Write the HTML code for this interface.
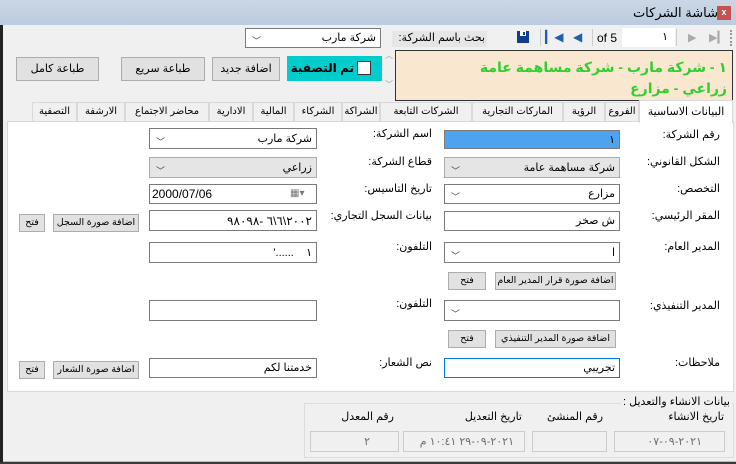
<!DOCTYPE html>
<html><head><meta charset="utf-8">
<style>
*{box-sizing:border-box;margin:0;padding:0}
body{width:736px;height:464px;overflow:hidden;background:#3a3a3a;font-family:"Liberation Sans","DejaVu Sans",sans-serif;font-size:11px;color:#000;position:relative}
.a{position:absolute}
.win{left:0;top:0;width:736px;height:462px;background:#f0f0f0;border-left:3px solid #222;}
.title{left:0;top:0;width:736px;height:25px;background:linear-gradient(#cbd7e6,#bccbdf);}
.t{white-space:nowrap;direction:rtl}
.box{background:#fff;border:1px solid #7a7a7a}
.btn{background:#e1e1e1;border:1px solid #adadad;text-align:center;font-size:9.5px;line-height:16px;white-space:nowrap;overflow:hidden;direction:rtl}
.lbl{direction:rtl;white-space:nowrap;font-size:11px;text-align:right}
.val{direction:rtl;text-align:right;padding-right:4px;font-size:11px;white-space:nowrap;overflow:hidden}
.chev{position:absolute;left:6px;top:3px;font-size:9px;color:#444}
.tab{top:102px;height:19px;background:#f0f0f0;border:1px solid #d9d9d9;border-bottom:none;text-align:center;font-size:10px;line-height:18px;white-space:nowrap;direction:rtl;overflow:hidden}
.dis{background:#f0f0f0;border:1px solid #ccc;color:#6d6d6d}
</style></head><body>
<div class="a win"></div>
<div class="a title"></div>
<div class="a t" style="right:18px;top:5px;font-size:13px">شاشة الشركات</div>
<div class="a" style="left:717px;top:6px;width:14px;height:14px;background:#c75050;color:#fff;font-size:9px;font-weight:bold;text-align:center;line-height:13px">x</div>
<!-- toolbar -->
<div class="a" style="left:3px;top:25px;width:733px;height:24px;background:#f0f0f0"></div>
<div class="a" style="left:730px;top:30px;width:2px;height:16px;border-left:2px dotted #999"></div>
<div class="a" style="left:709px;top:31px;color:#aaa;font-size:11px">▶▎</div>
<div class="a" style="left:688px;top:31px;color:#aaa;font-size:11px">▶</div>
<div class="a" style="left:676px;top:29px;width:1px;height:17px;background:#ccc"></div>
<div class="a" style="left:622px;top:28px;width:53px;height:19px;background:#fff;text-align:right;padding-right:7px;line-height:19px">١</div>
<div class="a" style="left:597px;top:31px;font-size:12px">of 5</div>
<div class="a" style="left:592px;top:29px;width:1px;height:17px;background:#ccc"></div>
<div class="a" style="left:573px;top:30px;color:#1f5fb0;font-size:12px">◀</div>
<div class="a" style="left:545px;top:30px;color:#1f5fb0;font-size:12px">▎◀</div>
<div class="a" style="left:540px;top:29px;width:1px;height:17px;background:#ccc"></div>
<svg class="a" style="left:517px;top:31px" width="12" height="12"><rect x="0" y="0" width="12" height="12" fill="#0f3f8a"/><rect x="3" y="0" width="6" height="5" fill="#fff"/><rect x="6" y="1" width="2" height="3" fill="#0f3f8a"/></svg>
<div class="a t" style="left:392px;top:31px;width:95px;height:16px;background:#e6e6e6;font-size:11px;text-align:right;padding-right:2px">بحث باسم الشركة:</div>
<div class="a box val" style="left:245px;top:28px;width:136px;height:20px;line-height:18px">شركة مارب<span class="chev">﹀</span></div>
<!-- info area -->
<div class="a" style="left:383px;top:50px;width:12px;height:51px;background:#f0f0f0;color:#999;font-size:8px;text-align:center">︿<br><br><br>﹀</div>
<div class="a" style="left:395px;top:50px;width:338px;height:51px;background:#f9e8cf;border:1px solid #333;direction:rtl;color:#2fcf2f;font-weight:bold;font-size:14px;padding:6px 5px 0 0;line-height:21px;white-space:nowrap;overflow:hidden">١ - شركة مارب - شركة مساهمة عامة<br>زراعي - مزارع</div>
<div class="a" style="left:287px;top:56px;width:95px;height:25px;background:#00cccc"></div>
<div class="a" style="left:357px;top:61px;width:14px;height:14px;background:#fff;border:1px solid #333"></div>
<div class="a t" style="left:292px;top:61px;font-weight:bold;font-size:12px;width:62px;text-align:right">تم التصفية</div>
<div class="a btn" style="left:212px;top:57px;width:68px;height:24px;line-height:22px;font-size:11px">اضافة جديد</div>
<div class="a btn" style="left:121px;top:57px;width:84px;height:24px;line-height:22px;font-size:11px">طباعة سريع</div>
<div class="a btn" style="left:16px;top:57px;width:83px;height:24px;line-height:22px;font-size:11px">طباعة كامل</div>
<!-- tabs -->
<div class="a" style="left:7px;top:121px;width:727px;height:271px;background:#fff;border:1px solid #d9d9d9"></div>
<div class="a tab" style="left:605px;width:34px">الفروع</div>
<div class="a tab" style="left:563px;width:42px">الرؤية</div>
<div class="a tab" style="left:472px;width:91px">الماركات التجارية</div>
<div class="a tab" style="left:380px;width:92px">الشركات التابعة</div>
<div class="a tab" style="left:342px;width:38px">الشراكة</div>
<div class="a tab" style="left:294px;width:48px">الشركاء</div>
<div class="a tab" style="left:253px;width:41px">المالية</div>
<div class="a tab" style="left:209px;width:44px">الادارية</div>
<div class="a tab" style="left:125px;width:84px">محاضر الاجتماع</div>
<div class="a tab" style="left:77px;width:48px">الارشفة</div>
<div class="a tab" style="left:32px;width:45px">التصفية</div>
<div class="a tab" style="left:639px;top:100px;width:94px;height:23px;background:#fff;line-height:22px;font-size:11px">البيانات الاساسية</div>
<!-- right column -->
<div class="a lbl" style="right:16px;top:128px">رقم الشركة:</div>
<div class="a val" style="left:444px;top:130px;width:176px;height:19px;background:#4ea3f0;border:1px solid #7a7a7a;line-height:18px">١</div>
<div class="a lbl" style="right:16px;top:155px">الشكل القانوني:</div>
<div class="a val" style="left:444px;top:157px;width:176px;height:21px;background:#e5e5e5;border:1px solid #adadad;line-height:20px">شركة مساهمة عامة<span class="chev">﹀</span></div>
<div class="a lbl" style="right:16px;top:182px">التخصص:</div>
<div class="a box val" style="left:444px;top:184px;width:176px;height:20px;line-height:19px">مزارع<span class="chev">﹀</span></div>
<div class="a lbl" style="right:16px;top:209px">المقر الرئيسي:</div>
<div class="a box val" style="left:444px;top:211px;width:176px;height:20px;line-height:19px">ش صخر</div>
<div class="a lbl" style="right:16px;top:240px">المدير العام:</div>
<div class="a box val" style="left:444px;top:242px;width:176px;height:21px;line-height:20px">ا<span class="chev">﹀</span></div>
<div class="a btn" style="left:495px;top:272px;width:121px;height:18px">اضافة صورة قرار المدير العام</div>
<div class="a btn" style="left:448px;top:272px;width:38px;height:18px">فتح</div>
<div class="a lbl" style="right:16px;top:299px">المدير التنفيذي:</div>
<div class="a box val" style="left:444px;top:300px;width:176px;height:21px;line-height:20px"><span class="chev">﹀</span></div>
<div class="a btn" style="left:495px;top:330px;width:121px;height:18px">اضافة صورة المدير التنفيذي</div>
<div class="a btn" style="left:448px;top:330px;width:38px;height:18px">فتح</div>
<div class="a lbl" style="right:16px;top:356px">ملاحظات:</div>
<div class="a val" style="left:444px;top:358px;width:176px;height:20px;background:#fff;border:1px solid #0078d7;line-height:19px">تجريبي</div>
<!-- middle column -->
<div class="a lbl" style="right:304px;top:127px">اسم الشركة:</div>
<div class="a box val" style="left:149px;top:128px;width:168px;height:21px;line-height:20px">شركة مارب<span class="chev">﹀</span></div>
<div class="a lbl" style="right:304px;top:155px">قطاع الشركة:</div>
<div class="a val" style="left:149px;top:157px;width:168px;height:21px;background:#e5e5e5;border:1px solid #adadad;line-height:20px">زراعي<span class="chev">﹀</span></div>
<div class="a lbl" style="right:304px;top:182px">تاريخ التاسيس:</div>
<div class="a box" style="left:149px;top:184px;width:168px;height:20px;line-height:18px;font-size:12px;padding-left:2px">2000/07/06<span style="position:absolute;left:140px;top:0;font-size:10px;color:#777">▦▾</span></div>
<div class="a lbl" style="right:304px;top:209px">بيانات السجل التجاري:</div>
<div class="a box val" style="left:149px;top:210px;width:168px;height:21px;line-height:20px;font-size:12px">٢٠٠٢\٦\٦ -٩٨٠٩٨</div>
<div class="a btn" style="left:53px;top:214px;width:86px;height:18px">اضافة صورة السجل</div>
<div class="a btn" style="left:19px;top:214px;width:26px;height:18px">فتح</div>
<div class="a lbl" style="right:304px;top:240px">التلفون:</div>
<div class="a box val" style="left:149px;top:242px;width:168px;height:21px;line-height:20px">١ &nbsp;&nbsp; ......'</div>
<div class="a lbl" style="right:304px;top:297px">التلفون:</div>
<div class="a box" style="left:149px;top:300px;width:168px;height:21px"></div>
<div class="a lbl" style="right:304px;top:356px">نص الشعار:</div>
<div class="a box val" style="left:149px;top:358px;width:168px;height:20px;line-height:19px">خدمتنا لكم</div>
<div class="a btn" style="left:53px;top:361px;width:86px;height:18px">اضافة صورة الشعار</div>
<div class="a btn" style="left:19px;top:361px;width:26px;height:18px">فتح</div>
<!-- bottom group -->
<div class="a" style="left:304px;top:403px;width:430px;height:55px;border:1px solid #dcdcdc"></div>
<div class="a lbl" style="right:4px;top:395px;background:#f0f0f0;padding:0 2px">بيانات الانشاء والتعديل :</div>
<div class="a lbl" style="right:12px;top:410px">تاريخ الانشاء</div>
<div class="a lbl" style="right:133px;top:410px">رقم المنشئ</div>
<div class="a lbl" style="right:214px;top:410px">تاريخ التعديل</div>
<div class="a lbl" style="right:342px;top:410px">رقم المعدل</div>
<div class="a dis val" style="left:614px;top:431px;width:111px;height:21px;line-height:20px;padding-right:22px">٢٠٢١-٠٩-٠٧</div>
<div class="a dis" style="left:532px;top:431px;width:75px;height:21px"></div>
<div class="a dis val" style="left:403px;top:431px;width:122px;height:21px;line-height:20px;padding-right:10px">٢٠٢١-٠٩-٢٩ ١٠:٤١ م</div>
<div class="a dis val" style="left:310px;top:431px;width:89px;height:21px;line-height:20px;padding-right:28px">٢</div>
<div class="a" style="left:3px;top:461px;width:733px;height:1px;background:#9fc3e8"></div>
</body></html>
